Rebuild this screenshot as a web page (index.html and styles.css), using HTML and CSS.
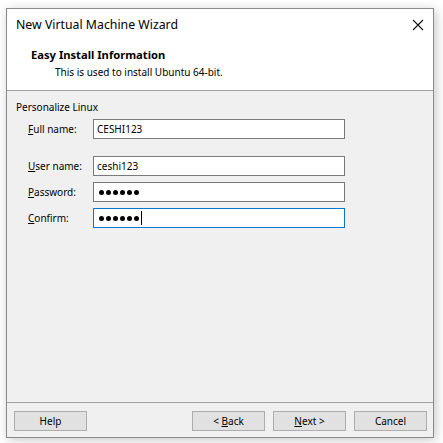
FILE: index.html
```html
<!DOCTYPE html>
<html>
<head>
<meta charset="utf-8">
<link rel="stylesheet" href="styles.css">
</head>
<body>
<div class="window">
  <div class="header">
    <div class="titlebar">
      <span class="title">New Virtual Machine Wizard</span>
      <svg class="close" width="12" height="12" viewBox="0 0 12 12"><path d="M1 1L11 11M11 1L1 11" stroke="#111" stroke-width="1.1" fill="none"/></svg>
    </div>
    <div class="heading">Easy Install Information</div>
    <div class="sub">This is used to install Ubuntu 64-bit.</div>
  </div>
  <div class="content">
    <div class="group">Personalize Linux</div>
    <div class="row first">
      <label class="lbl"><u>F</u>ull name:</label>
      <div class="input">CESHI123</div>
    </div>
    <div class="row gap">
      <label class="lbl"><u>U</u>ser name:</label>
      <div class="input">ceshi123</div>
    </div>
    <div class="row">
      <label class="lbl"><u>P</u>assword:</label>
      <div class="input"><span class="dot"></span><span class="dot"></span><span class="dot"></span><span class="dot"></span><span class="dot"></span><span class="dot"></span></div>
    </div>
    <div class="row">
      <label class="lbl"><u>C</u>onfirm:</label>
      <div class="input focus"><span class="dot"></span><span class="dot"></span><span class="dot"></span><span class="dot"></span><span class="dot"></span><span class="dot"></span><span class="caret"></span></div>
    </div>
  </div>
  <div class="footer">
    <button class="btn">Help</button>
    <div class="spacer"></div>
    <button class="btn">&lt; <u>B</u>ack</button>
    <button class="btn"><u>N</u>ext &gt;</button>
    <button class="btn">Cancel</button>
  </div>
</div>
</body>
</html>
```
FILE: styles.css
```css
html, body {
  margin: 0;
  padding: 0;
  background: #ffffff;
}
body {
  font-family: "Noto Sans", "Liberation Sans", sans-serif;
  font-size: 10px;
  color: #000;
  width: 443px;
  height: 443px;
  overflow: hidden;
}
.window {
  margin: 8px 0 0 6px;
  width: 426px;
  height: 428px;
  border: 1px solid #8a8a8a;
  background: #f0f0f0;
  display: flex;
  flex-direction: column;
  box-shadow: 2px 2px 10px rgba(0, 0, 0, 0.22);
}
.header {
  background: #ffffff;
  height: 81px;
  border-bottom: 1px solid #a0a0a0;
  box-sizing: content-box;
}
.titlebar {
  height: 30px;
  display: flex;
  align-items: center;
  justify-content: space-between;
  padding: 0 8px 0 9px;
}
.title {
  font-size: 12.3px;
  line-height: 16px;
  margin-top: 2px;
}
.close {
  margin-top: 1px;
  margin-right: 1px;
}
.heading {
  font-weight: bold;
  font-size: 11.2px;
  margin: 8px 0 0 24px;
  line-height: 16px;
}
.sub {
  margin: 1px 0 0 48px;
  line-height: 16px;
}
.content {
  flex: 1;
  padding: 8px 0 0 9px;
}
.group {
  line-height: 16px;
}
.row {
  display: flex;
  align-items: center;
  height: 20px;
  margin-top: 6px;
}
.row.first {
  margin-top: 4px;
}
.row.gap {
  margin-top: 17px;
}
.lbl {
  width: 65px;
  padding-left: 12px;
  line-height: 16px;
}
.input {
  box-sizing: border-box;
  width: 252px;
  height: 20px;
  border: 1px solid #7a7a7a;
  background: #fff;
  padding: 0 0 0 3px;
  line-height: 18px;
  display: flex;
  align-items: center;
}
.input.focus {
  border-color: #0078d7;
}
.dot {
  display: inline-block;
  width: 5px;
  height: 5px;
  border-radius: 50%;
  background: #000;
  margin-left: 2px;
}
.dot:first-child {
  margin-left: 2px;
}
.caret {
  display: inline-block;
  width: 1px;
  height: 14px;
  background: #000;
  margin-left: 2px;
}
.footer {
  border-top: 1px solid #a0a0a0;
  padding: 8px 6px 6px 7px;
  display: flex;
  gap: 8px;
}
.spacer {
  flex: 1;
}
.btn {
  width: 73px;
  height: 20px;
  box-sizing: border-box;
  border: 1px solid #adadad;
  background: #e1e1e1;
  font-family: inherit;
  font-size: 10px;
  color: #000;
  padding: 0;
  line-height: 16px;
}
```
